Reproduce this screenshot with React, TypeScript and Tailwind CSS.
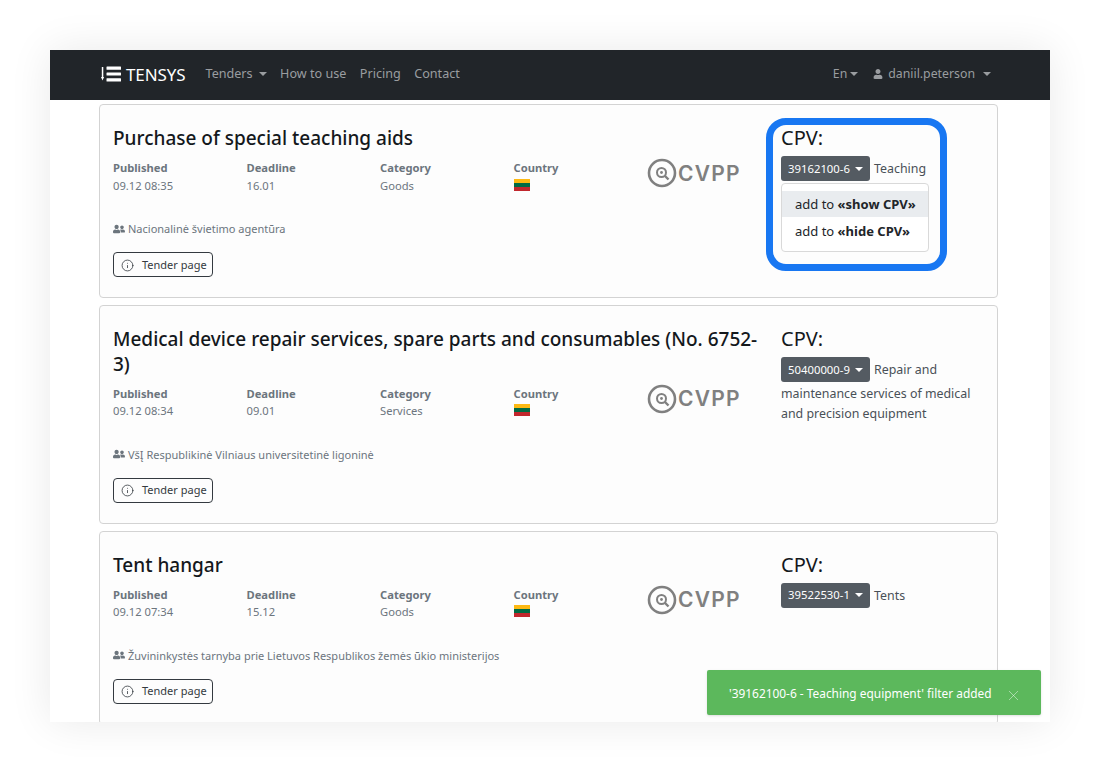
import { FaUser, FaUserFriends } from 'react-icons/fa';
import { Info, X } from 'lucide-react';

interface Tender {
  title: string;
  published: string;
  deadline: string;
  category: string;
  agency: string;
  cpv: string;
  cpvText: string;
}

const tenders: Tender[] = [
  {
    title: 'Purchase of special teaching aids',
    published: '09.12 08:35',
    deadline: '16.01',
    category: 'Goods',
    agency: 'Nacionalinė švietimo agentūra',
    cpv: '39162100-6',
    cpvText: 'Teaching',
  },
  {
    title: 'Medical device repair services, spare parts and consumables (No. 6752-3)',
    published: '09.12 08:34',
    deadline: '09.01',
    category: 'Services',
    agency: 'VšĮ Respublikinė Vilniaus universitetinė ligoninė',
    cpv: '50400000-9',
    cpvText: 'Repair and maintenance services of medical and precision equipment',
  },
  {
    title: 'Tent hangar',
    published: '09.12 07:34',
    deadline: '15.12',
    category: 'Goods',
    agency: 'Žuvininkystės tarnyba prie Lietuvos Respublikos žemės ūkio ministerijos',
    cpv: '39522530-1',
    cpvText: 'Tents',
  },
];

function Caret({ className }: { className: string }) {
  return <span className={`inline-block border-x-[4px] border-t-[4px] border-x-transparent ${className}`} />;
}

function TensysLogo() {
  return (
    <div className="flex items-center gap-[5px]">
      <svg width="20" height="16" viewBox="0 0 20 16" fill="white">
        <rect x="0.8" y="1" width="1.5" height="11" />
        <path d="M0 11h3.1l-1.55 3.5z" />
        <rect x="5.5" y="0.5" width="14.5" height="3.2" rx="0.5" />
        <rect x="5.5" y="6.4" width="14.5" height="3.2" rx="0.5" />
        <rect x="5.5" y="12.3" width="14.5" height="3.2" rx="0.5" />
      </svg>
      <span className="text-[17px] leading-none font-normal tracking-[-0.1px] text-white">TENSYS</span>
    </div>
  );
}

function CvppLogo() {
  return (
    <div className="flex h-[32px] w-[134px] shrink-0 items-center text-[#808080]">
      <svg width="30" height="30" viewBox="0 0 30 30" fill="none" stroke="currentColor">
        <circle cx="15" cy="15" r="13" strokeWidth="2.6" />
        <circle cx="14.5" cy="14.5" r="4.5" strokeWidth="2" />
        <circle cx="14.5" cy="14.5" r="1.4" fill="currentColor" stroke="none" />
        <path d="M18 18l3.5 3.5" strokeWidth="2.4" />
      </svg>
      <span className="ml-[1px] text-[21px] leading-none font-semibold tracking-[1.2px] [font-family:'Inter',sans-serif]">
        CVPP
      </span>
    </div>
  );
}

function MetaColumn({ label, children }: { label: string; children: React.ReactNode }) {
  return (
    <div className="w-[133.5px] shrink-0 text-[11.2px] leading-[17.5px] text-[#6c757d]">
      <div className="font-bold">{label}</div>
      {children}
    </div>
  );
}

function TenderCard({ tender, open }: { tender: Tender; open?: boolean }) {
  return (
    <div className="flex rounded-[4px] border border-[#d3d3d3] bg-[#fdfdfd] pt-[21px] pr-[14px] pb-[20px] pl-[13px]">
      <div className="w-[668px] shrink-0">
        <h2 className="w-[652px] text-[19px] leading-[24.5px] font-medium text-[#14181c]">{tender.title}</h2>
        <div className="mt-[8.5px] flex">
          <MetaColumn label="Published">{tender.published}</MetaColumn>
          <MetaColumn label="Deadline">{tender.deadline}</MetaColumn>
          <MetaColumn label="Category">{tender.category}</MetaColumn>
          <MetaColumn label="Country">
            <div className="mt-[2px] flex h-[12px] w-[16px] flex-col">
              <span className="flex-1 bg-[#fdb913]" />
              <span className="flex-1 bg-[#006a44]" />
              <span className="flex-1 bg-[#c1272d]" />
            </div>
          </MetaColumn>
          <div className="-mt-[2px]">
            <CvppLogo />
          </div>
        </div>
        <div className="mt-[26px] flex items-center gap-[3px] text-[11px] leading-[17px] text-[#6c757d]">
          <FaUserFriends className="h-[12px] w-[12px]" />
          {tender.agency}
        </div>
        <button
          type="button"
          className="mt-[15px] flex h-[25px] w-[100px] items-center rounded-[4px] border border-[#343a40] pt-[1px] pl-[7px] text-[11px] text-[#343a40]"
        >
          <Info className="h-[13px] w-[13px]" strokeWidth={1.5} />
          <span className="ml-[8px]">Tender page</span>
        </button>
      </div>
      <div className="relative flex-1">
        <div className="text-[20px] leading-[24px] text-[#14181c]">CPV:</div>
        <div className="mt-[6px] text-[12.4px] leading-[20px] text-[#495057]">
          <span className="mr-[4px] mb-[2px] inline-flex h-[25px] w-[89px] items-center justify-center gap-[5px] rounded-[3px] bg-[#545b62] align-middle text-[11.3px] text-white">
            {tender.cpv}
            <Caret className="border-t-white" />
          </span>
          {tender.cpvText}
        </div>
        {open && (
          <div className="absolute top-[57px] left-0 w-[148px] rounded-[4px] border border-[#d9d9d9] bg-white py-[7px] text-[13px] text-[#212529]">
            <div className="h-[26px] bg-[#e9ecef] pl-[13px] leading-[26px]">
              add to <b>«show CPV»</b>
            </div>
            <div className="h-[27px] pl-[13px] leading-[28px]">
              add to <b>«hide CPV»</b>
            </div>
          </div>
        )}
      </div>
    </div>
  );
}

export default function App() {
  return (
    <div className="h-[772px] w-[1100px] overflow-hidden bg-white pt-[50px] pl-[50px] [font-family:'Noto_Sans',sans-serif]">
      <div className="relative h-[672px] w-[1000px] overflow-hidden bg-white shadow-[0_0_40px_rgba(0,0,0,0.09)]">
        <nav className="flex h-[50px] items-center bg-[#212529] pr-[59px] pb-[2px] pl-[51px] text-[12.6px] text-[#9a9da0]">
          <TensysLogo />
          <div className="ml-[20px] flex items-center gap-[13.5px]">
            <span className="flex items-center gap-[6px]">
              Tenders
              <Caret className="border-t-[#9a9da0]" />
            </span>
            <span>How to use</span>
            <span>Pricing</span>
            <span>Contact</span>
          </div>
          <div className="ml-auto flex items-center text-[12.3px]">
            <span className="flex items-center gap-[3px]">
              En
              <Caret className="border-t-[#9a9da0]" />
            </span>
            <span className="ml-[15px] flex items-center gap-[5px]">
              <FaUser className="h-[10px] w-[10px]" />
              daniil.peterson
              <Caret className="ml-[3px] border-t-[#9a9da0]" />
            </span>
          </div>
        </nav>
        <div className="ml-[49px] flex w-[899px] flex-col gap-[7px] pt-[4px]">
          {tenders.map((tender, index) => (
            <TenderCard key={tender.cpv} tender={tender} open={index === 0} />
          ))}
        </div>
        {/* blue highlight drawn over the first card's CPV block */}
        <div className="absolute top-[68px] left-[716px] h-[153px] w-[181px] rounded-[20px] border-[7px] border-[#1877f2]" />
        <div className="absolute top-[620px] left-[657px] flex h-[45px] w-[334px] items-center rounded-[2px] bg-[#5cb85c] pt-[2px] pl-[22px] text-[11.9px] text-white shadow-sm">
          '39162100-6 - Teaching equipment' filter added
          <X className="absolute top-[17px] right-[19px] h-[17px] w-[17px] text-white/60" strokeWidth={1.1} />
        </div>
      </div>
    </div>
  );
}
